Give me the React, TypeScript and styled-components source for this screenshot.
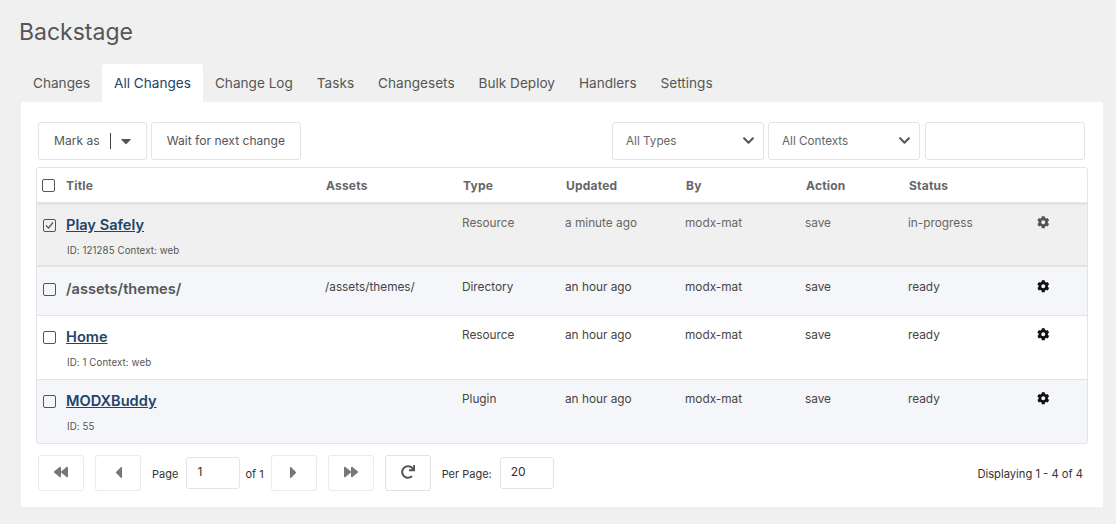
import React from "react";
import styled, { createGlobalStyle } from "styled-components";
import { FaBackward, FaCaretDown, FaCaretLeft, FaCaretRight, FaChevronDown, FaCog, FaForward, FaRedo } from "react-icons/fa";

const Global = createGlobalStyle`
  html, body { margin: 0; padding: 0; background: #f0f0f0; }
  body { font-family: Inter, "Liberation Sans", sans-serif; color: #555; width: 1116px; height: 524px; overflow: hidden; }
  * { box-sizing: border-box; }
`;

const Page = styled.div`
  padding: 17px 13px 0 21px;
`;
const Heading = styled.h1`
  margin: 0 0 16px -2px;
  font-size: 23px;
  line-height: 31px;
  font-weight: 400;
  color: #555;
`;
const Tabs = styled.nav`
  display: flex;
  height: 38px;
`;
const Tab = styled.div<{ $active?: boolean }>`
  padding: 0 12px 1px;
  display: flex;
  align-items: center;
  font-size: 13.6px;
  color: ${p => (p.$active ? "#234368" : "#555")};
  background: ${p => (p.$active ? "#fff" : "transparent")};
  border-radius: 3px 3px 0 0;
`;
const Panel = styled.section`
  background: #fff;
  height: 405px;
  padding: 20px 15px 0 15px;
`;
const Toolbar = styled.div`
  display: flex;
  height: 38px;
  margin: 0 3px 7px 2px;
  gap: 4px;
`;
const Button = styled.div`
  height: 38px;
  border: 1px solid #e4e4e4;
  border-radius: 3px;
  padding: 0 15px 1px;
  display: flex;
  align-items: center;
  font-size: 12.1px;
  color: #555;
  background: #fff;
`;
const Divider = styled.span`
  width: 1px;
  height: 16px;
  background: #444;
  margin: 0 7px 0 10px;
`;
const Caret = styled(FaCaretDown)`
  font-size: 16px;
  margin-right: -3px;
`;
const Spacer = styled.div`
  flex: 1;
`;
const Select = styled.div`
  width: 152px;
  height: 38px;
  border: 1px solid #e4e4e4;
  border-radius: 3px;
  padding: 0 8px 1px 13px;
  display: flex;
  align-items: center;
  justify-content: space-between;
  font-size: 11.7px;
  color: #666;
  svg { color: #555; font-size: 13px; }
`;
const Search = styled.div`
  width: 160px;
  height: 38px;
  margin-left: 1px;
  border: 1px solid #e4e4e4;
  border-radius: 3px;
`;
const Table = styled.div`
  width: 1052px;
  height: 277px;
  border: 1px solid #e4e4e4;
  border-radius: 3px;
  overflow: hidden;
`;
const columns = "29px 259px 137px 103px 120px 120px 103px 129px 1fr";
const HeadRow = styled.div`
  display: grid;
  grid-template-columns: ${columns};
  height: 37px;
  align-items: center;
  border-bottom: 3px solid #e4e4e4;
  font-size: 12px;
  font-weight: 700;
  color: #666;
  letter-spacing: 0.2px;
`;
const HeadCell = styled.div<{ $flush?: boolean }>`
  padding-left: ${p => (p.$flush ? 0 : 1)}px;
`;
const Row = styled.div<{ $bg: string; $height: number; $pad: number; $muted?: boolean }>`
  display: grid;
  grid-template-columns: ${columns};
  height: ${p => p.$height}px;
  background: ${p => p.$bg};
  border-bottom: ${p => (p.$muted ? 2 : 1)}px solid #e4e4e4;
  padding-top: ${p => p.$pad}px;
  font-size: 11.8px;
  line-height: 16px;
  color: ${p => (p.$muted ? "#666" : "#444")};
`;
const Check = styled.span<{ $head?: boolean }>`
  display: flex;
  align-items: center;
  justify-content: center;
  width: 13px;
  height: 13px;
  margin-left: ${p => (p.$head ? 5 : 6)}px;
  margin-top: ${p => (p.$head ? 0 : 3.5)}px;
  border: 1.6px solid #555;
  border-radius: 2px;
`;
const TitleLink = styled.a<{ $plain?: boolean }>`
  display: block;
  font-size: 14.6px;
  line-height: 18px;
  font-weight: 600;
  color: ${p => (p.$plain ? "#555" : "#234368")};
  text-decoration: ${p => (p.$plain ? "none" : "underline")};
  margin-top: 1px;
`;
const Meta = styled.div`
  font-size: 9.7px;
  line-height: 12px;
  color: #555;
  margin: 11px 0 0 1px;
  letter-spacing: 0.1px;
`;
const GearCell = styled.div<{ $muted?: boolean }>`
  display: flex;
  padding-top: 1px;
  font-size: 12.5px;
  color: ${p => (p.$muted ? "#555" : "#111")};
`;
const Pager = styled.div`
  display: flex;
  align-items: center;
  margin: 11px 5px 0 2px;
  height: 36px;
  font-size: 11px;
  color: #333;
`;
const PageButton = styled.div<{ $gap?: number; $dark?: boolean; $caret?: boolean }>`
  width: 46px;
  height: 36px;
  flex: none;
  border: 1px solid ${p => (p.$dark ? "#e0e0e0" : "#eaeaea")};
  border-radius: 3px;
  display: flex;
  align-items: center;
  justify-content: center;
  margin-right: ${p => p.$gap ?? 11}px;
  padding-bottom: ${p => (p.$caret ? 1 : 3)}px;
  font-size: ${p => (p.$caret ? 19 : 14)}px;
  color: ${p => (p.$dark ? "#555" : "#777")};
`;
const PageInput = styled.div<{ $width: number }>`
  width: ${p => p.$width}px;
  height: 32px;
  border: 1px solid #e4e4e4;
  border-radius: 3px;
  padding: 0 10px 3px;
  display: flex;
  align-items: center;
  font-size: 12px;
  color: #333;
`;
const Label = styled.span<{ $l: number; $r: number }>`
  margin: 0 ${p => p.$r}px 0 ${p => p.$l}px;
  padding-top: 1px;
  white-space: nowrap;
`;
const Displaying = styled.span`
  margin-left: auto;
  padding-top: 1px;
  font-size: 11.2px;
`;

const rows = [
  { title: "Play Safely", meta: "ID: 121285 Context: web", assets: "", type: "Resource", updated: "a minute ago", status: "in-progress", bg: "#f0f0f0", h: 62, pad: 10, checked: true },
  { title: "/assets/themes/", plain: true, meta: "", assets: "/assets/themes/", type: "Directory", updated: "an hour ago", status: "ready", bg: "#f4f6fa", h: 49, pad: 12 },
  { title: "Home", meta: "ID: 1 Context: web", assets: "", type: "Resource", updated: "an hour ago", status: "ready", bg: "#fff", h: 64, pad: 11 },
  { title: "MODXBuddy", meta: "ID: 55", assets: "", type: "Plugin", updated: "an hour ago", status: "ready", bg: "#f4f6fa", h: 64, pad: 11 },
];

export default function App() {
  return (
    <Page>
      <Global />
      <Heading>Backstage</Heading>
      <Tabs>
        <Tab>Changes</Tab>
        <Tab $active>All Changes</Tab>
        <Tab>Change Log</Tab>
        <Tab>Tasks</Tab>
        <Tab>Changesets</Tab>
        <Tab>Bulk Deploy</Tab>
        <Tab>Handlers</Tab>
        <Tab>Settings</Tab>
      </Tabs>
      <Panel>
        <Toolbar>
          <Button>Mark as<Divider /><Caret /></Button>
          <Button>Wait for next change</Button>
          <Spacer />
          <Select>All Types<FaChevronDown /></Select>
          <Select>All Contexts<FaChevronDown /></Select>
          <Search />
        </Toolbar>
        <Table>
          <HeadRow>
            <Check $head />
            <HeadCell $flush>Title</HeadCell>
            <HeadCell>Assets</HeadCell>
            <HeadCell>Type</HeadCell>
            <HeadCell>Updated</HeadCell>
            <HeadCell>By</HeadCell>
            <HeadCell>Action</HeadCell>
            <HeadCell>Status</HeadCell>
            <div />
          </HeadRow>
          {rows.map(r => (
            <Row key={r.title} $bg={r.bg} $height={r.h} $pad={r.pad} $muted={r.checked}>
              <Check>
                {r.checked && (
                  <svg width="9" height="9" viewBox="0 0 9 9" fill="none" stroke="#555" strokeWidth="1.2">
                    <path d="M1 4.5 L3.5 7 L8 1.5" />
                  </svg>
                )}
              </Check>
              <div>
                <TitleLink $plain={r.plain}>{r.title}</TitleLink>
                {r.meta && <Meta>{r.meta}</Meta>}
              </div>
              <div>{r.assets}</div>
              <div>{r.type}</div>
              <div>{r.updated}</div>
              <div>modx-mat</div>
              <div>save</div>
              <div>{r.status}</div>
              <GearCell $muted={r.checked}><FaCog /></GearCell>
            </Row>
          ))}
        </Table>
        <Pager>
          <PageButton><FaBackward /></PageButton>
          <PageButton $gap={0} $caret><FaCaretLeft /></PageButton>
          <Label $l={11} $r={8}>Page</Label>
          <PageInput $width={54}>1</PageInput>
          <Label $l={5} $r={7}>of 1</Label>
          <PageButton $caret><FaCaretRight /></PageButton>
          <PageButton><FaForward /></PageButton>
          <PageButton $gap={0} $dark><FaRedo /></PageButton>
          <Label $l={11} $r={8}>Per Page:</Label>
          <PageInput $width={54}>20</PageInput>
          <Displaying>Displaying 1 - 4 of 4</Displaying>
        </Pager>
      </Panel>
    </Page>
  );
}
